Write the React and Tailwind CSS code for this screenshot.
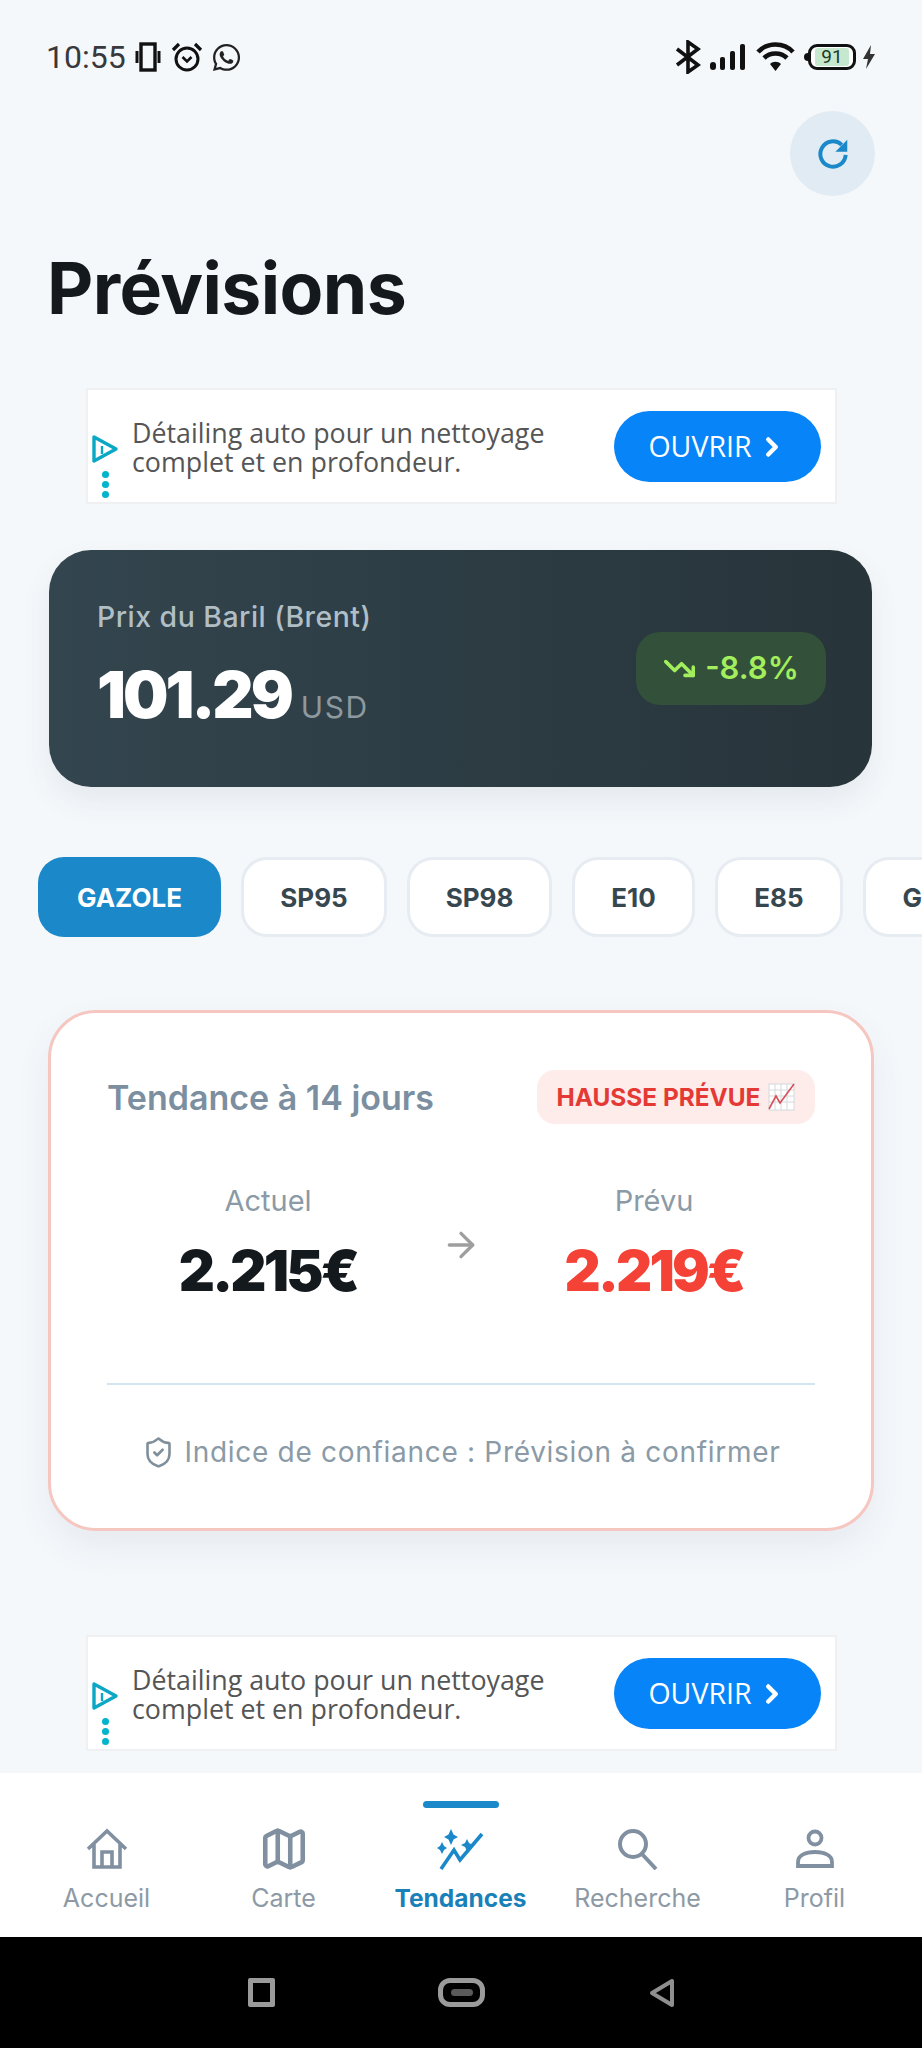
import { ArrowRight, ChevronRight, Map, ShieldCheck, TrendingDown } from 'lucide-react'
import { FaWhatsapp } from 'react-icons/fa'

const CHIPS = [
  { label: 'SP95', w: 'w-[146px]' },
  { label: 'SP98', w: 'w-[145px]' },
  { label: 'E10', w: 'w-[123px]' },
  { label: 'E85', w: 'w-[128px]' },
  { label: 'GPL', w: 'w-[130px]' },
]

function StatusBar() {
  return (
    <div className="h-[111px] pt-[38px] pl-[46px] pr-[45px] flex items-start justify-between text-[#111]">
      <div className="flex items-center h-[38px]">
        <span className="font-['Roboto'] text-[32px] text-[#37393c] w-[89px]">10:55</span>
        <svg width="26" height="30" viewBox="0 0 26 30" className="mr-[10px]">
          <rect x="6" y="2" width="14" height="26" fill="none" stroke="#111" strokeWidth="3.4" />
          <rect x="0.5" y="9" width="3" height="12" fill="#111" />
          <rect x="22.5" y="9" width="3" height="12" fill="#111" />
        </svg>
        <svg width="32" height="32" viewBox="0 0 32 32" className="mr-[8px]">
          <circle cx="16" cy="18" r="11" fill="none" stroke="#111" strokeWidth="3" />
          <path d="M11.5 16 16 20.500 20.500 16" fill="none" stroke="#111" strokeWidth="2.6" />
          <path d="M2 9 8 3M30 9 24 3" stroke="#111" strokeWidth="3.2" />
        </svg>
        <FaWhatsapp size={31} color="#222" />
      </div>
      <div className="flex items-center h-[38px]">
        <svg width="26" height="34" viewBox="0 0 26 34" fill="none" stroke="#111" strokeWidth="3.6" className="mr-[8px]">
          <path d="M2 9 23 25 13 32V2L23 9 2 25" />
        </svg>
        <svg width="38" height="28" viewBox="0 0 38 28" className="mr-[9px]">
          <rect x="1" y="19" width="6" height="8" rx="3" fill="#111" />
          <rect x="11" y="14" width="5" height="13" rx="2" fill="#111" />
          <rect x="21" y="8" width="5" height="19" rx="2" fill="#111" />
          <rect x="31" y="1" width="5" height="26" rx="2" fill="#111" />
        </svg>
        <svg width="39" height="32" viewBox="0 0 39 32" className="mr-[13px]">
          <path d="M2 11C11 1 28 1 37 11M8 17C14 11 25 11 31 17" fill="none" stroke="#111" strokeWidth="4.6" />
          <path d="M14 23C17 20 22 20 25 23L19.500 30Z" fill="#111" />
        </svg>
        <div className="relative w-[48px] h-[26px] border-[3px] border-[#111] rounded-[9px] bg-white flex items-center justify-center mr-[5px]">
          <div className="absolute -left-[7px] top-[6px] w-[4px] h-[8px] bg-[#111] rounded-l-full"></div>
          <span className="w-[34px] h-[18px] rounded-[3px] bg-[#c5e8cf] font-['Roboto'] text-[19px] leading-[18px] text-center text-[#1d3a26]">91</span>
        </div>
        <svg width="16" height="28" viewBox="0 0 16 26">
          <path d="M10 1 2 15H7L5 25 14 10H9Z" fill="#333" />
        </svg>
      </div>
    </div>
  )
}

function AdIcon() {
  return (
    <div className="w-[34px] pl-[3px] pt-[44px] shrink-0 flex flex-col">
      <svg width="28" height="30" viewBox="0 0 28 30">
        <path d="M3 3 25 15 3 27Z" fill="none" stroke="#0aa8c4" strokeWidth="3.4" strokeLinejoin="round" />
        <path d="M11 12V20" stroke="#0aa8c4" strokeWidth="2.4" />
      </svg>
      <div className="flex flex-col gap-[3px] pl-[11px] mt-[7px]">
        <div className="w-[7px] h-[7px] rounded-full bg-[#00b4cc]"></div>
        <div className="w-[7px] h-[7px] rounded-full bg-[#00b4cc]"></div>
        <div className="w-[7px] h-[7px] rounded-full bg-[#00b4cc]"></div>
      </div>
    </div>
  )
}

function Ad() {
  return (
    <div className="mx-[86px] w-[751px] h-[116px] bg-white border-2 border-[#eef0f2] flex shrink-0">
      <AdIcon />
      <div className="pl-[10px] pt-[28px] font-['Open_Sans'] text-[26.8px] leading-[29px] text-[#555] w-[492px] whitespace-nowrap">
        Détailing auto pour un nettoyage<br />complet et en profondeur.
      </div>
      <div className="mt-[21px] w-[207px] h-[71px] rounded-full bg-[#0784f8] flex items-center justify-center gap-[5px] font-['Open_Sans'] text-[28.5px] text-white">
        OUVRIR
        <ChevronRight size={30} strokeWidth={3.6} />
      </div>
    </div>
  )
}

function NavItem({ label, active, children }) {
  return (
    <div className="relative w-[177px] flex flex-col items-center pt-[57px]">
      {active && <div className="absolute top-[28px] w-[76px] h-[7px] rounded-full bg-[#1a88c9]"></div>}
      <div className="h-[38px] flex items-center justify-center">{children}</div>
      <div className={`mt-[16px] leading-[29px] whitespace-nowrap ${active ? 'text-[24.5px] font-bold text-[#1a80b8]' : 'text-[25px] text-[#8d9aa5]'}`}>
        {label}
      </div>
    </div>
  )
}

function BottomNav() {
  return (
    <div className="mt-auto h-[164px] bg-white flex px-[18px] shrink-0">
      <NavItem label="Accueil">
        <svg width="44" height="42" viewBox="0 0 44 42" fill="none" stroke="#8090a0" strokeWidth="3.6">
          <path d="M3 21 22 3 41 21M9 16V39H35V16M17 39V24H27V39" />
        </svg>
      </NavItem>
      <NavItem label="Carte">
        <Map size={50} strokeWidth={2.2} color="#8090a0" />
      </NavItem>
      <NavItem label="Tendances" active>
        <svg width="50" height="42" viewBox="0 0 50 42" fill="none">
          <path d="M5 41 18 22 24 32 46 6" stroke="#1a88c9" strokeWidth="3.6" />
          <path d="M15 1 17.500 6.500 22 9 17.500 11.500 15 17 12.500 11.500 8 9 12.500 6.500Z" fill="#1a88c9" />
          <path d="M31 11 33 15 37 17 33 19 31 23 29 19 25 17 29 15Z" fill="#1a88c9" />
          <path d="M6 14 8 18 11 20 8 22 6 26 4 22 1 20 4 18Z" fill="#1a88c9" />
        </svg>
      </NavItem>
      <NavItem label="Recherche">
        <svg width="42" height="42" viewBox="0 0 42 42" fill="none" stroke="#8090a0" strokeWidth="4">
          <circle cx="16" cy="16" r="13" />
          <path d="M25 26 39 41" />
        </svg>
      </NavItem>
      <NavItem label="Profil">
        <svg width="40" height="40" viewBox="0 0 40 40" fill="none" stroke="#8090a0" strokeWidth="3.8">
          <circle cx="20" cy="9" r="6.500" />
          <path d="M3 37V33C3 26 11 23 20 23S37 26 37 33V37Z" />
        </svg>
      </NavItem>
    </div>
  )
}

function AndroidBar() {
  return (
    <div className="h-[111px] bg-black shrink-0 flex items-start pt-[41px] pl-[248px]">
      <div className="w-[27px] h-[29px] border-[5px] border-[#9a9a9a] rounded-[2px]"></div>
      <div className="ml-[163px] w-[47px] h-[29px] border-[5px] border-[#9a9a9a] rounded-[12px] flex items-center justify-center">
        <div className="w-[22px] h-[7px] rounded-full bg-[#5a5a5a]"></div>
      </div>
      <svg width="26" height="30" viewBox="0 0 26 30" className="ml-[164px]">
        <path d="M23 3V27L3 15Z" fill="none" stroke="#8f8f8f" strokeWidth="4" strokeLinejoin="round" />
      </svg>
    </div>
  )
}

function ChartEmoji() {
  return (
    <svg width="27" height="28" viewBox="0 0 27 28" className="ml-[8px]">
      <rect x="1" y="1" width="25" height="26" fill="#fff" stroke="#d5d8dc" />
      <path d="M7 1V27M13 1V27M19 1V27M1 7H26M1 13H26M1 19H26" stroke="#d5d8dc" strokeWidth="1" />
      <path d="M1 26 8 13 12 20 26 1" fill="none" stroke="#d8505a" strokeWidth="1.6" />
    </svg>
  )
}

export default function App() {
  return (
    <div className="w-[922px] h-[2048px] overflow-hidden bg-[#f5f8fb] flex flex-col font-['Inter',sans-serif]">
      <StatusBar />

      <div className="flex justify-end pr-[47px]">
        <div className="w-[85px] h-[85px] rounded-full bg-[#e1ebf3] flex items-center justify-center">
          <svg width="38" height="38" viewBox="0 0 24 24" fill="none">
            <path d="M20 12.500a8 8 0 1 1-2.500-6.300" stroke="#1a88c9" strokeWidth="2.500" />
            <path d="M21 3v7.500h-7.500z" fill="#1a88c9" />
          </svg>
        </div>
      </div>

      <h1 className="mt-[42px] pl-[47px] h-[100px] text-[71.5px] leading-[100px] font-bold text-[#14191e] tracking-[-0.6px]">Prévisions</h1>

      <div className="mt-[50px]"><Ad /></div>

      <div className="mt-[46px] mx-[49px] w-[823px] h-[237px] rounded-[42px] bg-gradient-to-r from-[#33454e] to-[#27343a] shadow-[0_14px_30px_rgba(40,60,80,0.08)] flex items-center justify-between pl-[48px] pr-[46px] shrink-0">
        <div>
          <div className="text-[28.4px] leading-[34px] font-medium text-[#b0bec5] tracking-[0.5px] -mt-[6px]">Prix du Baril (Brent)</div>
          <div className="mt-[25px] flex items-baseline">
            <span className="text-[64px] leading-[72px] font-black text-white tracking-[-3px]">101.29</span>
            <span className="ml-[10px] text-[30px] text-[#8d999f] tracking-[1.5px]">USD</span>
          </div>
        </div>
        <div className="w-[190px] h-[73px] rounded-[24px] bg-[#33503a] flex items-center justify-center gap-[9px] text-[#a2ee5c] text-[31px] font-semibold">
          <TrendingDown size={33} strokeWidth={2.6} />
          -8.8%
        </div>
      </div>

      <div className="mt-[70px] pl-[38px] flex gap-[20px] shrink-0">
        <div className="w-[183px] h-[80px] shrink-0 rounded-[26px] bg-[#1a88c9] flex items-center justify-center text-[26px] font-bold text-white">GAZOLE</div>
        {CHIPS.map(c => (
          <div key={c.label} className={`${c.w} h-[80px] shrink-0 rounded-[26px] bg-white border-[3px] border-[#e6ecf1] flex items-center justify-center text-[26px] font-bold text-[#37474f]`}>
            {c.label}
          </div>
        ))}
      </div>

      <div className="mt-[73px] mx-[48px] w-[826px] h-[521px] rounded-[48px] bg-white border-[3px] border-[#f6c6c0] shadow-[0_16px_36px_rgba(40,60,80,0.07)] px-[56px] pt-[57px] shrink-0">
        <div className="flex items-center justify-between h-[54px]">
          <div className="text-[34px] font-semibold text-[#7c8fa0]">Tendance à 14 jours</div>
          <div className="w-[278px] h-[54px] rounded-[18px] bg-[#fdecea] flex items-center justify-center text-[24.4px] font-bold text-[#e53935] whitespace-nowrap">
            HAUSSE PRÉVUE
            <ChartEmoji />
          </div>
        </div>

        <div className="mt-[59px] grid grid-cols-[322px_1fr_322px] h-[149px]">
          <div className="text-center">
            <div className="text-[29px] leading-[36px] text-[#8a9aa6]">Actuel</div>
            <div className="mt-[17px] text-[56px] leading-[70px] font-black text-[#14191e] tracking-[-2.8px]">2.215€</div>
          </div>
          <div className="flex justify-center pt-[42px]">
            <ArrowRight size={40} strokeWidth={2} color="#9e9e9e" />
          </div>
          <div className="text-center">
            <div className="text-[29px] leading-[36px] text-[#8a9aa6]">Prévu</div>
            <div className="mt-[17px] text-[56px] leading-[70px] font-black text-[#f44336] tracking-[-2.8px]">2.219€</div>
          </div>
        </div>

        <div className="mt-[51px] h-[2px] bg-[#d5e5f0]"></div>

        <div className="mt-[49px] flex items-center justify-center gap-[10px] text-[28px] leading-[36px] text-[#8a9aa6] tracking-[0.7px]">
          <ShieldCheck size={33} strokeWidth={1.9} color="#7f8f9b" />
          Indice de confiance : Prévision à confirmer
        </div>
      </div>

      <div className="mt-[104px]"><Ad /></div>

      <BottomNav />
      <AndroidBar />
    </div>
  )
}
